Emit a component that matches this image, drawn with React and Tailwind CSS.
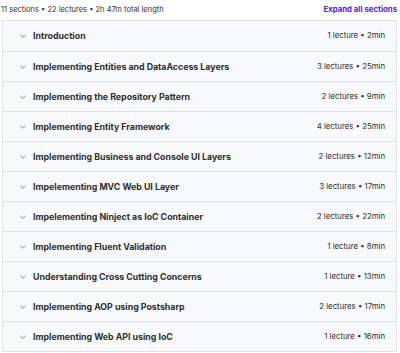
import React from "react";

const sections = [
  ["Introduction", "1 lecture • 2min"],
  ["Implementing Entities and DataAccess Layers", "3 lectures • 25min"],
  ["Implementing the Repository Pattern", "2 lectures • 9min"],
  ["Implementing Entity Framework", "4 lectures • 25min"],
  ["Implementing Business and Console UI Layers", "2 lectures • 12min"],
  ["Impelementing MVC Web UI Layer", "3 lectures • 17min"],
  ["Impelementing Ninject as IoC Container", "2 lectures • 22min"],
  ["Implementing Fluent Validation", "1 lecture • 8min"],
  ["Understanding Cross Cutting Concerns", "1 lecture • 13min"],
  ["Implementing AOP using Postsharp", "2 lectures • 17min"],
  ["Implementing Web API using IoC", "1 lecture • 16min"],
];

function Chevron() {
  return (
    <svg width="8" height="8" viewBox="0 0 24 24" fill="none" stroke="#4a4d50" strokeWidth="2" strokeLinecap="round" strokeLinejoin="round">
      <path d="M5 9l7 7 7-7" />
    </svg>
  );
}

export default function App() {
  return (
    <div className="w-[400px] h-[353px] bg-white px-[2px] font-['Inter',sans-serif] text-[#2d2f31]">
      <div className="flex items-center justify-between h-[20px] pr-[1px]">
        <span className="text-[7.5px] text-[#2d2f31] -ml-[1px]">11 sections • 22 lectures • 2h 47m total length</span>
        <span className="text-[7.8px] font-bold text-[#5624d0]">Expand all sections</span>
      </div>
      <div className="border border-[#dfe3e6] w-[395px]">
        {sections.map(([title, meta], i) => (
          <div
            key={i}
            className={`flex items-center h-[30px] bg-[#f7f9fa] pl-[16px] pr-[11px] ${i > 0 ? "border-t border-[#dfe3e6]" : ""}`}
          >
            <Chevron />
            <span className="ml-[6px] text-[8.8px] font-bold">{title}</span>
            <span className="ml-auto text-[7.8px]">{meta}</span>
          </div>
        ))}
      </div>
    </div>
  );
}
